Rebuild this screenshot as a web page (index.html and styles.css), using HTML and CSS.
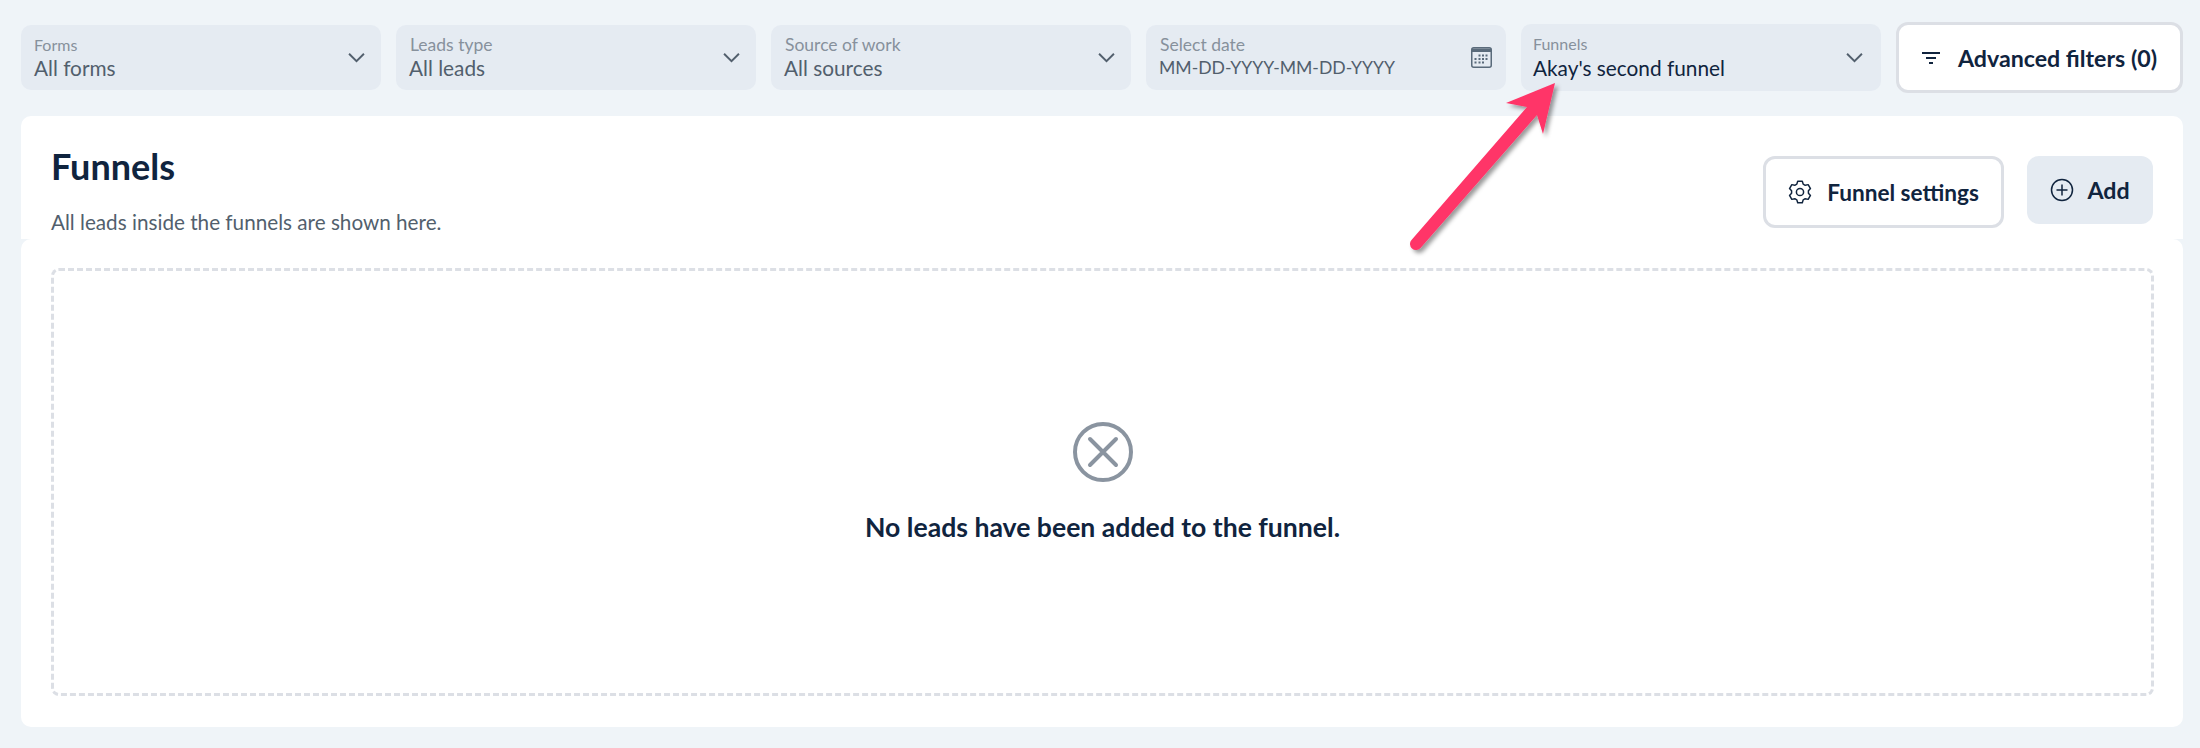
FILE: index.html
```html
<!DOCTYPE html>
<html lang="en">
<head>
  <meta charset="UTF-8">
  <meta name="viewport" content="width=device-width, initial-scale=1.0">
  <title>Funnels</title>
  <link rel="stylesheet" href="styles.css">
</head>
<body>
  <div id="app">
    <div id="filters">
      <div class="select">
        <div class="select-text">
          <span class="select-label label-small">Forms</span>
          <span class="select-value">All forms</span>
        </div>
        <svg class="chevron" viewBox="0 0 16 10"><path d="M1 1.500l7 7 7-7"/></svg>
      </div>
      <div class="select">
        <div class="select-text">
          <span class="select-label">Leads type</span>
          <span class="select-value">All leads</span>
        </div>
        <svg class="chevron" viewBox="0 0 16 10"><path d="M1 1.500l7 7 7-7"/></svg>
      </div>
      <div class="select">
        <div class="select-text">
          <span class="select-label">Source of work</span>
          <span class="select-value">All sources</span>
        </div>
        <svg class="chevron" viewBox="0 0 16 10"><path d="M1 1.500l7 7 7-7"/></svg>
      </div>
      <div class="select">
        <div class="select-text">
          <span class="select-label">Select date</span>
          <span class="select-value date-value">MM-DD-YYYY-MM-DD-YYYY</span>
        </div>
        <svg class="calendar" viewBox="0 0 21 21">
          <rect x="0.750" y="0.750" width="19.500" height="19.500" rx="2" fill="none" stroke="#5a6b7b" stroke-width="1.500"/>
          <path d="M1 1.500h19v3.500H1z" fill="#5a6b7b"/>
          <path d="M7.500 8.500h2M11 8.500h2M14.500 8.500h2M3.500 12h2M7.500 12h2M11 12h2M14.500 12h2M3.500 15.500h2M7.500 15.500h2M11 15.500h2" stroke="#5a6b7b" stroke-width="2"/>
        </svg>
      </div>
      <div class="select select-active">
        <div class="select-text">
          <span class="select-label label-small">Funnels</span>
          <span class="select-value value-dark">Akay's second funnel</span>
        </div>
        <svg class="chevron" viewBox="0 0 16 10"><path d="M1 1.500l7 7 7-7"/></svg>
      </div>
      <button class="btn btn-outline btn-filters">
        <svg class="filter-icon" viewBox="0 0 18 12"><path d="M0 1h18M4 6h10M7 11h4"/></svg>
        Advanced filters&nbsp;(0)
      </button>
    </div>

    <div id="card">
      <div id="card-head">
        <div>
          <h1 id="title">Funnels</h1>
          <p id="subtitle">All leads inside the funnels are shown here.</p>
        </div>
        <div id="card-actions">
          <button class="btn btn-outline btn-settings">
            <svg class="btn-icon gear" viewBox="0 0 24 24">
              <circle cx="12" cy="12" r="3.600"/>
              <path d="M9.710 1.240L14.290 1.240 15.180 4.120 17.230 5.300 20.170 4.640 22.460 8.600 20.420 10.820 20.420 13.180 22.460 15.400 20.170 19.360 17.230 18.700 15.180 19.880 14.290 22.760 9.710 22.760 8.820 19.880 6.770 18.700 3.830 19.360 1.540 15.400 3.580 13.180 3.580 10.820 1.540 8.600 3.830 4.640 6.770 5.300 8.820 4.120z"/>
            </svg>
            Funnel settings
          </button>
          <button class="btn btn-fill">
            <svg class="btn-icon" viewBox="0 0 24 24">
              <circle cx="12" cy="12" r="10.500"/>
              <path d="M12 6.500v11M6.500 12h11"/>
            </svg>
            Add
          </button>
        </div>
      </div>
      <div id="panel">
        <div id="empty">
          <svg class="empty-icon" viewBox="0 0 60 60">
            <circle cx="30" cy="30" r="28"/>
            <path d="M17 17l26 26M43 17L17 43"/>
          </svg>
          <div class="empty-text">No leads have been added to the funnel.</div>
        </div>
      </div>
    </div>

    <svg id="arrow" viewBox="0 0 180 190">
      <defs>
        <filter id="arrow-shadow" x="-20%" y="-20%" width="140%" height="140%">
          <feDropShadow dx="3" dy="3" stdDeviation="2" flood-color="#000" flood-opacity="0.4"/>
        </filter>
      </defs>
      <path filter="url(#arrow-shadow)" fill="#ff3468" d="M155 13L106 33 127 37 11.500 170a6 6 0 0 0 9 8L137 45l6 19z"/>
    </svg>
  </div>
</body>
</html>
```

FILE: styles.css
```css
* {
  box-sizing: border-box;
}

:root {
  --page-bg: #eff4f8;
  --field-bg: #e5ebf2;
  --border-color: #dcdfe5;
  --text-dark: #10243e;
  --text-mid: #525f6d;
  --text-light: #87919c;
}

html, body {
  height: 100%;
  margin: 0;
  font-family: Lato, sans-serif;
  background: var(--page-bg);
  color: var(--text-dark);
}

#app {
  position: relative;
  height: 748px;
  padding: 22px 17px 0 21px;
  overflow: hidden;
}

#filters {
  display: flex;
  align-items: center;
  height: 71px;
  gap: 15px;
}

.select {
  width: 360px;
  height: 65px;
  padding: 9px 16px 0 13px;
  background: var(--field-bg);
  border-radius: 10px;
  display: flex;
  align-items: center;
  justify-content: space-between;
  flex: none;
}

.select-active {
  height: 67px;
  padding: 9px 18px 0 12px;
}

.select-text {
  display: flex;
  flex-direction: column;
  align-self: flex-start;
}

.select-label {
  font-size: 17.500px;
  line-height: 21px;
  color: var(--text-light);
  padding-left: 1px;
}

.label-small {
  font-size: 16px;
  padding-left: 0;
}

.select-value {
  font-size: 20.800px;
  line-height: 25px;
  color: var(--text-mid);
}

.date-value {
  font-size: 17.600px;
}

.value-dark {
  color: var(--text-dark);
  margin-top: 1px;
}

.chevron {
  width: 17px;
  height: 11px;
  margin-top: -9px;
  fill: none;
  stroke: var(--text-mid);
  stroke-width: 1.800;
}

.calendar {
  width: 21px;
  height: 21px;
  margin-right: -2px;
  margin-top: -9px;
}

.btn {
  display: flex;
  align-items: center;
  justify-content: center;
  font: inherit;
  font-weight: 700;
  font-size: 23.200px;
  color: var(--text-dark);
  border-radius: 12px;
  flex: none;
}

.btn-outline {
  background: #fff;
  border: 3px solid var(--border-color);
}

.btn-filters {
  width: 287px;
  height: 71px;
  gap: 18px;
}

.filter-icon {
  width: 18px;
  height: 12px;
  fill: none;
  stroke: var(--text-dark);
  stroke-width: 1.800;
}

.btn-icon {
  width: 24px;
  height: 24px;
  fill: none;
  stroke: var(--text-dark);
  stroke-width: 1.500;
}

.gear {
  stroke-linejoin: round;
}

.btn-fill {
  width: 126px;
  height: 68px;
  gap: 13px;
  background: var(--field-bg);
  border: none;
}

.btn-settings {
  width: 241px;
  height: 72px;
  gap: 15px;
  font-size: 22.600px;
}

#card {
  margin-top: 23px;
  height: 611px;
  display: flex;
  flex-direction: column;
}

#card-head {
  height: 123px;
  padding: 28px 30px 0 30px;
  display: flex;
  justify-content: space-between;
  background: #fff;
  border-radius: 10px 10px 0 0;
}

#title {
  margin: 0;
  font-size: 36px;
  line-height: 44px;
  font-weight: 700;
}

#subtitle {
  margin: 21px 0 0;
  font-size: 20.700px;
  line-height: 26px;
  color: var(--text-mid);
}

#card-actions {
  display: flex;
  gap: 23px;
  align-items: flex-start;
  padding-top: 12px;
}

#panel {
  flex: 1;
  padding: 29px 29px 31px 30px;
  background: #fff;
  border-radius: 10px;
}

#empty {
  height: 100%;
  border: 3px dashed var(--border-color);
  border-radius: 8px;
  display: flex;
  flex-direction: column;
  align-items: center;
  justify-content: center;
}

.empty-icon {
  width: 60px;
  height: 60px;
  fill: none;
  stroke: #8a94a0;
  stroke-width: 4;
  stroke-linecap: round;
}

.empty-text {
  margin-top: 29px;
  font-size: 26.600px;
  line-height: 32px;
  font-weight: 700;
}

/* annotation drawn on top of the screenshot */
#arrow {
  position: absolute;
  left: 1400px;
  top: 70px;
  width: 180px;
  height: 190px;
}
```
